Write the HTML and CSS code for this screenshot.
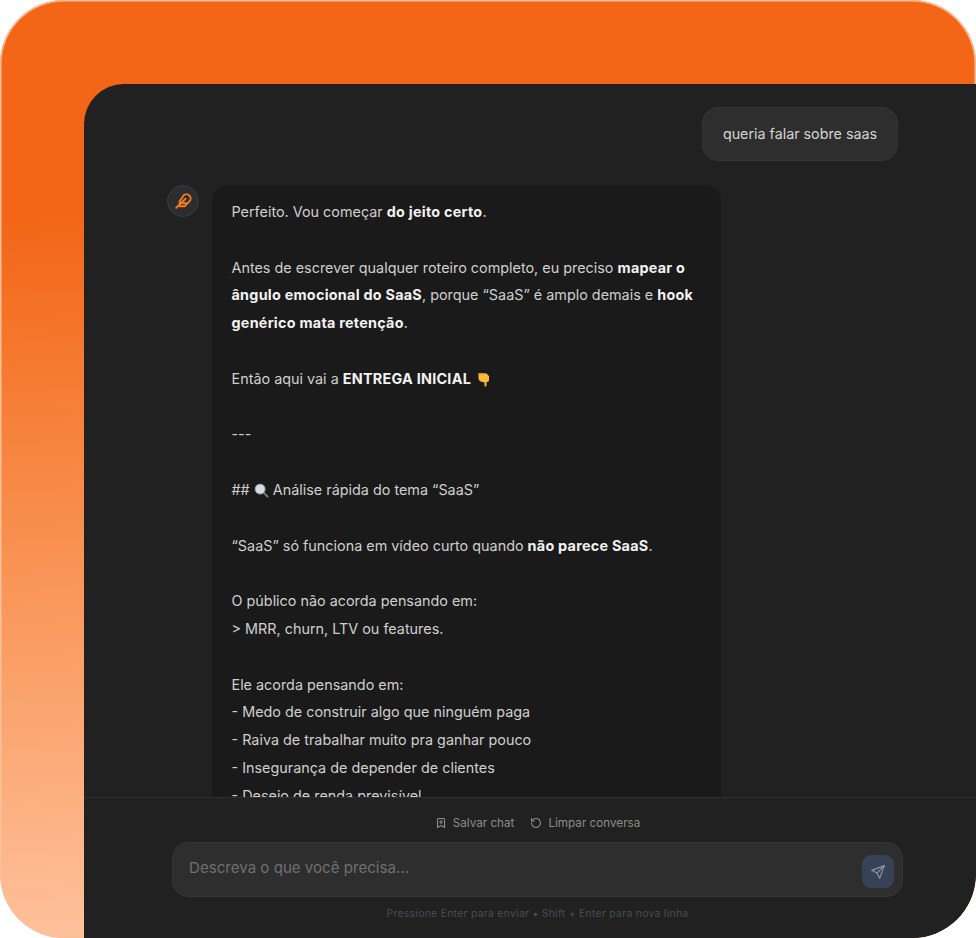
FILE: index.html
```html
<!DOCTYPE html>
<html lang="pt-BR">
<head>
<meta charset="utf-8">
<title>Chat</title>
<link rel="stylesheet" href="styles.css">
</head>
<body>
<div class="frame">
  <main class="panel">
    <section class="messages">
      <div class="user-row"><div class="user-bubble">queria falar sobre saas</div></div>
      <div class="ai-row">
        <div class="avatar">
          <svg viewBox="0 0 24 24" width="18" height="18" fill="none" stroke="#f47a1f" stroke-width="2.500" stroke-linecap="round" stroke-linejoin="round"><path d="M12.700 4.700a5.500 5.500 0 0 1 7.800 7.800L14 19H7.500v-6.500z"/><path d="M15.500 9 3 21"/><path d="M17.500 15H10"/></svg>
        </div>
        <article class="ai-bubble">
          <p>Perfeito. Vou começar <b>do jeito certo</b>.</p>
          <p>Antes de escrever qualquer roteiro completo, eu preciso <b>mapear o ângulo emocional do SaaS</b>, porque “SaaS” é amplo demais e <b>hook genérico mata retenção</b>.</p>
          <p>Então aqui vai a <b>ENTREGA INICIAL</b> <svg class="emoji hand" viewBox="0 0 12 15" width="12" height="15"><path fill="#f5bd3a" d="M.5 1.500h8l2.500 2.500v4c0 1.200-.8 2-1.900 2h-.6v3.200c0 .9-.5 1.300-1 1.300s-1-.4-1-1.300V10.500L2.700 9.500C1.400 8.700.5 7.600.5 6.200z"/><path fill="#d8922a" d="M.5 1h6.500v1.400H.5z"/></svg></p>
          <p>---</p>
          <p>## <svg class="emoji" viewBox="0 0 16 16" width="15" height="15"><path d="M10 10l4.500 4.500" stroke="#7d7d7d" stroke-width="2" stroke-linecap="round"/><circle cx="6.500" cy="6.500" r="5.300" fill="#d7dde2" stroke="#a3a3a3"/></svg> Análise rápida do tema “SaaS”</p>
          <p>“SaaS” só funciona em vídeo curto quando <b>não parece SaaS</b>.</p>
          <p>O público não acorda pensando em:<br>&gt; MRR, churn, LTV ou features.</p>
          <p>Ele acorda pensando em:<br>- Medo de construir algo que ninguém paga<br>- Raiva de trabalhar muito pra ganhar pouco<br>- Insegurança de depender de clientes<br>- Desejo de renda previsível</p>
        </article>
      </div>
    </section>
    <footer class="composer">
      <div class="actions">
        <span class="action">
          <svg viewBox="0 0 24 24" width="12" height="12" fill="none" stroke="currentColor" stroke-width="2.200" stroke-linecap="round" stroke-linejoin="round"><path d="M19 21l-7-4-7 4V5a2 2 0 0 1 2-2h10a2 2 0 0 1 2 2z"/><path d="M12 7v6M9 10h6"/></svg>
          Salvar chat
        </span>
        <span class="action">
          <svg viewBox="0 0 24 24" width="12" height="12" fill="none" stroke="currentColor" stroke-width="2.200" stroke-linecap="round" stroke-linejoin="round"><path d="M3 12a9 9 0 1 0 3-6.700L3 8"/><path d="M3 3v5h5"/></svg>
          Limpar conversa
        </span>
      </div>
      <div class="input">
        <span class="placeholder">Descreva o que você precisa...</span>
        <span class="send">
          <svg viewBox="0 0 24 24" width="16" height="16" fill="none" stroke="#8b93a3" stroke-width="1.800" stroke-linecap="round" stroke-linejoin="round"><path d="M21.500 2.500 2.500 9.500l8 4 4 8z"/><path d="M21.500 2.500 10.500 13.500"/></svg>
        </span>
      </div>
      <div class="hint">Pressione Enter para enviar • Shift + Enter para nova linha</div>
    </footer>
  </main>
</div>
</body>
</html>
```
FILE: styles.css
```css
* { box-sizing: border-box; }
html, body { margin: 0; height: 100%; background: #fff; }
body { font-family: Inter, "Liberation Sans", sans-serif; overflow: hidden; }

.frame {
  width: 976px;
  height: 938px;
  padding: 84px 0 0 84px;
  border-radius: 64px;
  overflow: hidden;
  background: linear-gradient(176deg, #f36617 0%, #f36617 22%, #f7853f 45%, #fba672 72%, #ffc9a8 100%);
  box-shadow: inset 0 0 0 1.500px #fbc09a;
}

.panel {
  height: 100%;
  display: flex;
  flex-direction: column;
  background: #212121;
  border-top-left-radius: 40px;
  border-bottom-right-radius: 64px;
  overflow: hidden;
}

.messages {
  flex: 1;
  min-height: 0;
  overflow: hidden;
  padding: 23px 78px 0 83px;
}

.user-row { display: flex; justify-content: flex-end; margin-bottom: 24px; }
.user-bubble {
  height: 54px;
  width: 196px;
  padding-bottom: 2px;
  display: flex;
  align-items: center;
  justify-content: center;
  border-radius: 16px;
  border: 1px solid #363636;
  background: #2e2e2e;
  color: #d4d4d4;
  font-size: 14.300px;
}

.ai-row { display: flex; align-items: flex-start; gap: 13px; }
.avatar {
  width: 32px;
  height: 32px;
  flex: none;
  display: flex;
  align-items: center;
  justify-content: center;
  border-radius: 50%;
  background: #2b2d30;
  border: 1px solid #363b43;
}

.ai-bubble {
  width: 509px;
  flex: none;
  padding: 13px 19.500px 40px;
  border-radius: 16px 16px 0 0;
  background: #1a1a1a;
  color: #cfcfcf;
  font-size: 14.380px;
  line-height: 27.800px;
}
.ai-bubble p { margin: 0 0 27.800px; }
.ai-bubble b { color: #f2f2f2; font-weight: 700; letter-spacing: 0.250px; }
.emoji { vertical-align: -3px; }
.hand { margin-left: 3px; }

.composer {
  flex: none;
  height: 141px;
  border-top: 1px solid #2f2f2f;
  padding: 16px 73px 0 88px;
  background: #212121;
}

.actions {
  display: flex;
  justify-content: center;
  gap: 16px;
  color: #8c8c8c;
  font-size: 11.700px;
  height: 17px;
  align-items: center;
}
.action { display: inline-flex; align-items: center; gap: 6px; }

.input {
  margin-top: 11px;
  height: 55px;
  padding: 0 8px 0 16px;
  display: flex;
  align-items: center;
  justify-content: space-between;
  border-radius: 16px;
  border: 1px solid #363636;
  background: #2e2e2e;
}
.placeholder { color: #6f6f72; font-size: 15.100px; position: relative; top: -2px; }
.send {
  width: 32px;
  height: 33px;
  display: flex;
  align-items: center;
  justify-content: center;
  border-radius: 9px;
  background: #374257;
  margin-top: 4px;
}

.hint {
  margin-top: 10px;
  text-align: center;
  color: #4c4d50;
  font-size: 10.300px;
  letter-spacing: 0.330px;
}
```
